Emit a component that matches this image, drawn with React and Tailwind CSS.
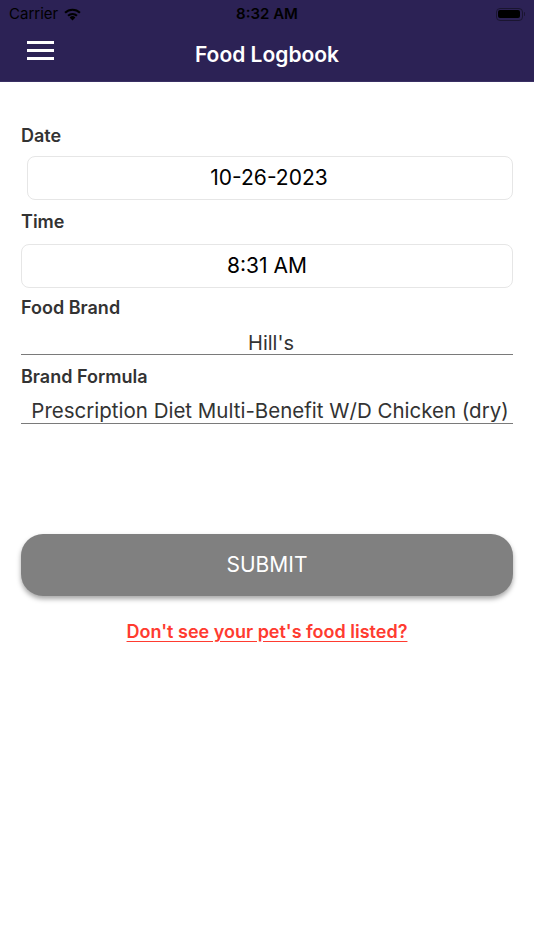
import React from "react";

export default function App() {
  return (
    <div className="w-[534px] h-[950px] bg-white relative" style={{ fontFamily: "Inter, 'Liberation Sans', sans-serif" }}>
      <div className="bg-[#2c2255] h-[82px] flex flex-col border-b border-[#3a3064]">
        <div className="h-[28px] flex items-center justify-between px-[9px] relative">
          <div className="flex items-center gap-[5px] text-[15px] text-black">
            <span>Carrier</span>
            <svg width="19" height="14" viewBox="0 0 19 14">
              <path d="M9.5 13.5 L6.6 10.4 A4.2 4.2 0 0 1 12.4 10.4 Z" fill="black" />
              <path d="M4.3 8.1 A7.4 7.4 0 0 1 14.7 8.1 L13.2 9.6 A5.3 5.3 0 0 0 5.8 9.6 Z" fill="black" />
              <path d="M1.3 5.1 A11.6 11.6 0 0 1 17.7 5.1 L16.2 6.6 A9.5 9.5 0 0 0 2.8 6.6 Z" fill="black" />
            </svg>
          </div>
          <span className="absolute left-1/2 -translate-x-1/2 text-[15px] font-semibold text-black">8:32 AM</span>
          <div className="flex items-center">
            <div className="w-[27px] h-[13px] rounded-[4px] border border-[#1a1530] p-[1.5px]">
              <div className="w-full h-full bg-black rounded-[2px]" />
            </div>
            <div className="w-[1.5px] h-[4px] bg-[#1a1530] ml-[1px] rounded-r" />
          </div>
        </div>
        <div className="flex-1 flex items-center relative">
          <div className="absolute left-[27px] top-[13px] flex flex-col gap-[5px]">
            <div className="w-[27px] h-[3px] bg-white" />
            <div className="w-[27px] h-[3px] bg-white" />
            <div className="w-[27px] h-[3px] bg-white" />
          </div>
          <div className="w-full text-center text-white text-[21px] font-semibold">Food Logbook</div>
        </div>
      </div>

      <div className="px-[21px] pt-[44px] flex flex-col">
        <div className="text-[18px] font-semibold text-[#333] leading-[20px]">Date</div>
        <div className="mt-[10px] ml-[6px] h-[44px] rounded-[8px] border border-[#e6e6e6] flex items-center justify-center text-[21px] text-black pr-[2px]">
          10-26-2023
        </div>
        <div className="mt-[12px] text-[18px] font-semibold text-[#333] leading-[20px]">Time</div>
        <div className="mt-[12px] h-[44px] rounded-[8px] border border-[#e6e6e6] flex items-center justify-center text-[21px] text-black">
          8:31 AM
        </div>
        <div className="mt-[10px] text-[18px] font-semibold text-[#333] leading-[20px]">Food Brand</div>
        <div className="mt-[9px] h-[28px] border-b-[1.5px] border-[#7a7a7a] flex items-end justify-center text-[20px] text-[#333] leading-[22px] pl-[8px]">
          Hill's
        </div>
        <div className="mt-[12px] text-[18px] font-semibold text-[#333] leading-[20px]">Brand Formula</div>
        <div className="mt-[9px] h-[28px] border-b-[1.5px] border-[#7a7a7a] flex items-end justify-center text-[20.5px] text-[#333] leading-[24px] whitespace-nowrap pl-[6px]">
          Prescription Diet Multi-Benefit W/D Chicken (dry)
        </div>

        <button className="mt-[110px] h-[62px] rounded-[22px] bg-[#808080] text-white text-[21px] shadow-[0_3px_5px_rgba(0,0,0,0.35)]">
          SUBMIT
        </button>
        <div className="mt-[22px] text-center">
          <span className="text-[18px] font-semibold text-[#ff3b30] underline underline-offset-[3px]">Don't see your pet's food listed?</span>
        </div>
      </div>
    </div>
  );
}
